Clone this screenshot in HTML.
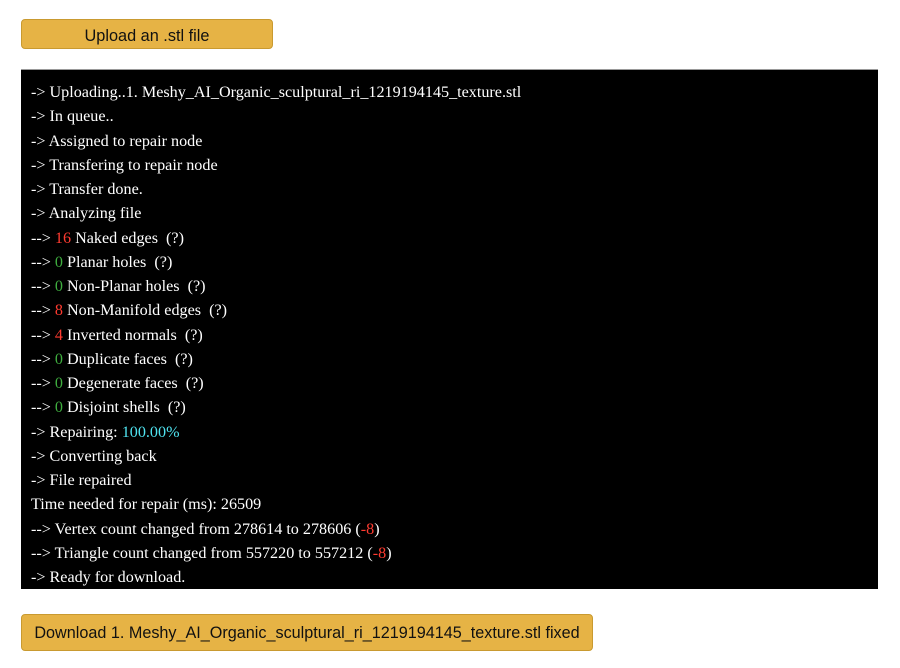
<!DOCTYPE html>
<html><head><style>
body{margin:0;background:#fff;width:900px;height:668px;position:relative;font-family:"Liberation Sans",sans-serif}
.btn{position:absolute;background:#e6b345;border:1px solid #c99a30;border-radius:4px;color:#111;font-size:16px;text-align:center;box-sizing:border-box}
#up{left:21px;top:19px;width:252px;height:30px;line-height:32px;font-size:16.3px}
#dl{left:21px;top:614px;width:572px;height:37px;line-height:37px;font-size:16.2px}
#log{position:absolute;left:21px;top:69px;width:857px;height:520px;background:#000;color:#fff;font-family:"Liberation Serif",serif;font-size:16.15px;box-sizing:border-box;padding:11px 10px;border-top:1px solid #999}
#log div{height:24.25px;line-height:24.25px;white-space:nowrap}
.r{color:#ff3b30}.g{color:#3fae3f}.c{color:#4fe3f0}
</style></head><body>
<div class="btn" id="up">Upload an .stl file</div>
<div id="log">
<div>-&gt; Uploading..1. Meshy_AI_Organic_sculptural_ri_1219194145_texture.stl</div>
<div>-&gt; In queue..</div>
<div>-&gt; Assigned to repair node</div>
<div>-&gt; Transfering to repair node</div>
<div>-&gt; Transfer done.</div>
<div>-&gt; Analyzing file</div>
<div>--&gt; <span class="r">16</span> Naked edges &nbsp;(?)</div>
<div>--&gt; <span class="g">0</span> Planar holes &nbsp;(?)</div>
<div>--&gt; <span class="g">0</span> Non-Planar holes &nbsp;(?)</div>
<div>--&gt; <span class="r">8</span> Non-Manifold edges &nbsp;(?)</div>
<div>--&gt; <span class="r">4</span> Inverted normals &nbsp;(?)</div>
<div>--&gt; <span class="g">0</span> Duplicate faces &nbsp;(?)</div>
<div>--&gt; <span class="g">0</span> Degenerate faces &nbsp;(?)</div>
<div>--&gt; <span class="g">0</span> Disjoint shells &nbsp;(?)</div>
<div>-&gt; Repairing: <span class="c">100.00%</span></div>
<div>-&gt; Converting back</div>
<div>-&gt; File repaired</div>
<div>Time needed for repair (ms): 26509</div>
<div>--&gt; Vertex count changed from 278614 to 278606 (<span class="r">-8</span>)</div>
<div>--&gt; Triangle count changed from 557220 to 557212 (<span class="r">-8</span>)</div>
<div>-&gt; Ready for download.</div>
</div>
<div class="btn" id="dl">Download 1. Meshy_AI_Organic_sculptural_ri_1219194145_texture.stl fixed</div>
</body></html>
